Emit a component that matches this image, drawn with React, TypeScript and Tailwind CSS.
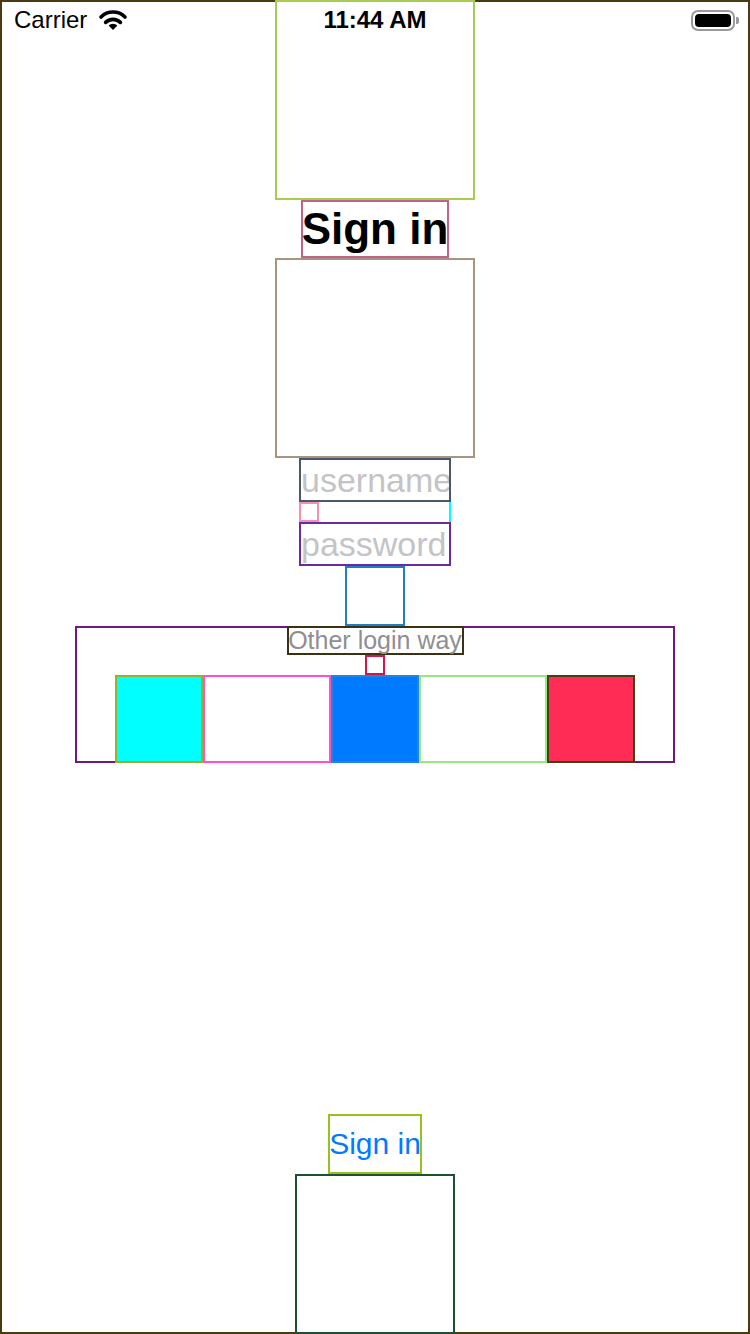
export default function App() {
    return (
        <div className="relative w-[750px] h-[1334px] bg-white shadow-[inset_0_0_0_2px_#4a3a10] flex flex-col items-center overflow-hidden" style={{ fontFamily: '"Liberation Sans", Arial, sans-serif' }}>
            <div className="w-[200px] h-[200px] shrink-0 border-2 border-[#a6cc52]"></div>

            <div className="w-[148px] h-[58px] shrink-0 border-2 border-[#c26189] flex items-center justify-center text-[44px] font-bold text-black leading-none whitespace-nowrap">
                Sign in
            </div>

            <div className="w-[200px] h-[200px] shrink-0 border-2 border-[#a8957f]"></div>

            <input placeholder="username" className="w-[152px] h-[44px] shrink-0 border-2 border-[#4a5869] px-0 text-[34px] leading-none outline-none placeholder:text-[#c4c4c6] bg-transparent" />

            <div className="w-[152px] h-[20px] shrink-0 border-r-2 border-[#00ffff] flex">
                <div className="w-[20px] h-[20px] border-2 border-[#f291b2]"></div>
            </div>

            <input placeholder="password" type="password" className="w-[152px] h-[44px] shrink-0 border-2 border-[#6a2aa8] px-0 text-[34px] leading-none outline-none placeholder:text-[#c4c4c6] bg-transparent" />

            <div className="w-[60px] h-[60px] shrink-0 border-2 border-[#1f7fc6]"></div>

            <div className="w-[600px] h-[137px] shrink-0 shadow-[inset_0_0_0_2px_#6b1a82] flex flex-col items-center">
                <div className="w-[177px] h-[29px] border-2 border-[#3a3212] flex items-center justify-center text-[25px] leading-none text-[#8e8e93] whitespace-nowrap">
                    Other login way
                </div>
                <div className="w-[20px] h-[20px] border-2 border-[#d2184a]"></div>
                <div className="flex h-[88px]">
                    <div className="w-[88px] h-full border-2 border-[#98b224] bg-[#00ffff]"></div>
                    <div className="w-[128px] h-full border-2 border-[#ff52c8]"></div>
                    <div className="w-[88px] h-full border-2 border-[#2283e0] bg-[#007aff]"></div>
                    <div className="w-[128px] h-full border-2 border-[#92ea80]"></div>
                    <div className="w-[88px] h-full border-2 border-[#424212] bg-[#ff2d55]"></div>
                </div>
            </div>

            <div className="flex-1"></div>

            <div className="w-[94px] h-[60px] shrink-0 border-2 border-[#98c020] flex items-center justify-center text-[30px] leading-none text-[#007aff] whitespace-nowrap">
                Sign in
            </div>

            <div className="w-[160px] h-[160px] shrink-0 border-2 border-[#1f4f32]"></div>

            {/* status bar */}
            <div className="absolute top-0 left-0 right-0 h-[40px] flex items-center text-black">
                <span className="ml-[14px] text-[24px] leading-none">Carrier</span>
                <svg className="ml-[10px]" width="32" height="24" viewBox="0 0 32 24">
                    <path d="M4 9 A17 17 0 0 1 28 9" fill="none" stroke="#000" strokeWidth="3.6" strokeLinecap="round" />
                    <path d="M8.6 14.4 A10.5 10.5 0 0 1 23.4 14.4" fill="none" stroke="#000" strokeWidth="3.6" strokeLinecap="round" />
                    <path d="M16 22 L11.6 17.6 A6.2 6.2 0 0 1 20.4 17.6 Z" fill="#000" />
                </svg>
                <span className="absolute left-0 right-0 text-center text-[24px] font-bold leading-none">11:44 AM</span>
                <div className="ml-auto mr-[11px] flex items-center">
                    <div className="w-[44px] h-[21px] rounded-[7px] border-2 border-[#9a9a9a] p-[2px]">
                        <div className="w-full h-full rounded-[4px] bg-black"></div>
                    </div>
                    <div className="w-[3px] h-[7px] ml-[1px] rounded-r-[2px] bg-[#9a9a9a]"></div>
                </div>
            </div>
        </div>
    )
}
